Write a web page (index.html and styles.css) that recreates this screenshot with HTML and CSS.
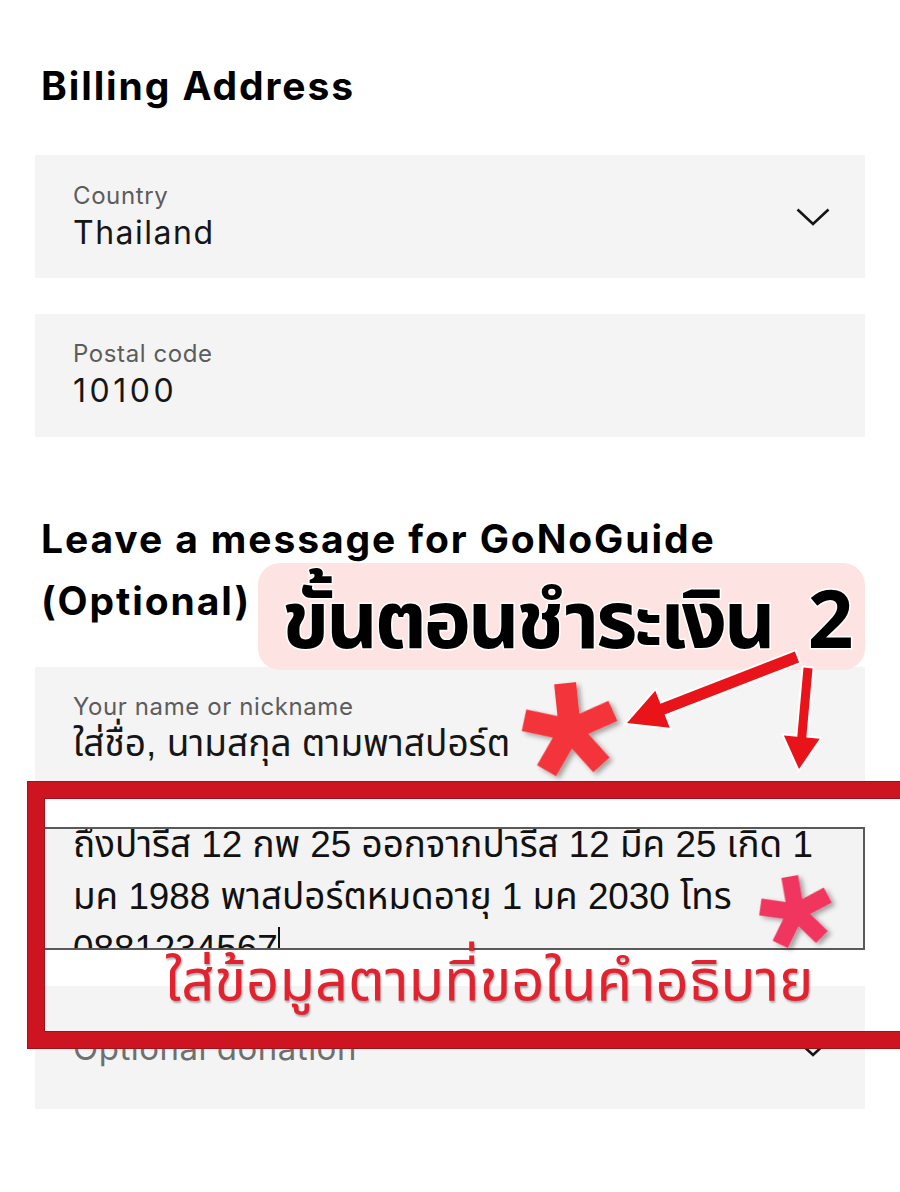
FILE: index.html
```html
<!DOCTYPE html>
<html lang="th">
<head>
<meta charset="utf-8">
<title>Billing Address</title>
<link rel="stylesheet" href="styles.css">
</head>
<body>
<div class="screen">
  <main class="page">
    <h2 class="title">Billing Address</h2>

    <div class="field field-select">
      <div class="field-text">
        <span class="label">Country</span>
        <span class="value">Thailand</span>
      </div>
      <svg class="chevron" viewBox="0 0 34 18" width="34" height="18"><path d="M1.5 1.5 L17 16 L32.5 1.5" fill="none" stroke="#161616" stroke-width="2.6"/></svg>
    </div>

    <div class="field">
      <div class="field-text">
        <span class="label">Postal code</span>
        <span class="value value-num">10100</span>
      </div>
    </div>

    <h2 class="title title-msg">Leave a message for GoNoGuide<br>(Optional)</h2>

    <div class="field field-name">
      <div class="field-text">
        <span class="label">Your name or nickname</span>
        <span class="value value-thai">ใส่ชื่อ, นามสกุล ตามพาสปอร์ต</span>
      </div>
    </div>

    <div class="message">
      <div class="message-text">ถึงปารีส 12 กพ 25 ออกจากปารีส 12 มีค 25 เกิด 1<br>มค 1988 พาสปอร์ตหมดอายุ 1 มค 2030 โทร<br>0881234567<span class="caret"></span></div>
    </div>

    <div class="field field-select field-donation">
      <span class="placeholder">Optional donation</span>
      <svg class="chevron" viewBox="0 0 34 18" width="34" height="18"><path d="M1.5 1.5 L17 16 L32.5 1.5" fill="none" stroke="#161616" stroke-width="2.6"/></svg>
    </div>
  </main>

  <div class="step-label">ขั้นตอนชำระเงิน&nbsp;&nbsp;2</div>
  <div class="highlight-frame"></div>
  <div class="hint">ใส่ข้อมูลตามที่ขอในคำอธิบาย</div>

  <svg class="marks" viewBox="0 0 900 1192" width="900" height="1192">
    <defs>
      <filter id="shadow" x="-30%" y="-30%" width="160%" height="160%">
        <feDropShadow dx="3" dy="3" stdDeviation="2.5" flood-color="#000" flood-opacity="0.35"/>
      </filter>
    </defs>
    <g class="arrow">
      <polygon points="794.9,651.6 660.4,703.8 655.3,690.7 627,723 669.7,727.7 664.6,714.6 799.1,662.4"/>
      <polygon points="803.5,667.6 797.3,736.7 783.9,735.5 799,769 819.7,738.7 806.3,737.5 812.5,668.4"/>
    </g>
    <g filter="url(#shadow)" transform="translate(570 730) rotate(-6)" stroke="#f3363b" stroke-width="22">
      <line x1="0" y1="0" x2="0" y2="-47"/>
      <line x1="0" y1="0" x2="0" y2="-47" transform="rotate(72)"/>
      <line x1="0" y1="0" x2="0" y2="-47" transform="rotate(144)"/>
      <line x1="0" y1="0" x2="0" y2="-47" transform="rotate(216)"/>
      <line x1="0" y1="0" x2="0" y2="-47" transform="rotate(288)"/>
    </g>
    <g filter="url(#shadow)" transform="translate(796 912) rotate(-10)" stroke="#f0355e" stroke-width="17">
      <line x1="0" y1="0" x2="0" y2="-36"/>
      <line x1="0" y1="0" x2="0" y2="-36" transform="rotate(72)"/>
      <line x1="0" y1="0" x2="0" y2="-36" transform="rotate(144)"/>
      <line x1="0" y1="0" x2="0" y2="-36" transform="rotate(216)"/>
      <line x1="0" y1="0" x2="0" y2="-36" transform="rotate(288)"/>
    </g>
  </svg>
</div>
</body>
</html>
```
FILE: styles.css
```css
html, body {
  margin: 0;
  padding: 0;
  background: #ffffff;
}

body {
  font-family: "Inter", "Noto Sans Thai", "Loma", "Garuda", "Noto Sans", sans-serif;
  color: #161616;
}

.screen {
  position: relative;
  width: 900px;
  height: 1192px;
  overflow: hidden;
}

.page {
  padding: 64px 35px 0 35px;
  display: flex;
  flex-direction: column;
}

.title {
  margin: 0 0 47px 6px;
  font-size: 39px;
  line-height: 44px;
  font-weight: 700;
  letter-spacing: 1.9px;
  color: #000;
}

.title-msg {
  margin-top: 35px;
  margin-bottom: 35px;
  line-height: 62px;
}

.field {
  box-sizing: border-box;
  height: 123px;
  background: #f4f4f4;
  padding: 26px 35px 0 38px;
  margin-bottom: 36px;
}

.field-select {
  display: flex;
  align-items: center;
  justify-content: space-between;
  padding-top: 0;
}

.field-text {
  display: flex;
  flex-direction: column;
  gap: 4px;
}

.label {
  font-size: 24px;
  line-height: 28px;
  color: #5c5c5c;
  letter-spacing: 0.6px;
}

.value {
  font-size: 32px;
  line-height: 38px;
  color: #161616;
  letter-spacing: 1.5px;
}

.value-num {
  letter-spacing: 3.5px;
}

.value-thai {
  font-family: "Liberation Sans", "Noto Sans Thai", "Loma", "Garuda", sans-serif;
  font-size: 37px;
  letter-spacing: 0;
}

.chevron {
  display: block;
  flex: none;
}

.field-name {
  height: 124px;
  margin-bottom: 36px;
}

.message {
  box-sizing: border-box;
  height: 123px;
  background: #f3f3f3;
  border: 2px solid #595959;
  overflow: hidden;
  margin-bottom: 36px;
}

.message-text {
  margin-top: -10px;
  padding-left: 36px;
  font-family: "Liberation Sans", "Noto Sans Thai", "Loma", "Garuda", sans-serif;
  font-size: 36.8px;
  line-height: 52px;
  color: #111;
  white-space: nowrap;
}

.caret {
  display: inline-block;
  width: 2px;
  height: 36px;
  background: #111;
  vertical-align: -2px;
}

.field-donation {
  margin-bottom: 0;
}

.placeholder {
  font-size: 33px;
  color: #6f6f6f;
  letter-spacing: 0.5px;
}

/* annotation overlays */
.step-label {
  position: absolute;
  left: 258px;
  top: 563px;
  width: 607px;
  height: 107px;
  box-sizing: border-box;
  border-radius: 22px;
  background: #fde3e1;
  padding-left: 24px;
  font-family: "Noto Sans Thai", "Loma", "Garuda", "Noto Sans", sans-serif;
  font-weight: 700;
  font-stretch: condensed;
  font-size: 80px;
  line-height: 122px;
  letter-spacing: -3.2px;
  color: #000;
  -webkit-text-stroke: 3px #fff;
  paint-order: stroke fill;
  white-space: nowrap;
  overflow: visible;
}

.highlight-frame {
  position: absolute;
  left: 28px;
  top: 782px;
  width: 900px;
  height: 266px;
  box-sizing: border-box;
  border: 16px solid #cc1521;
  box-shadow: 0 0 0 1px #a80f18, inset 0 0 0 1px #a80f18;
}

.hint {
  position: absolute;
  left: 165px;
  top: 937px;
  font-family: "Noto Sans Thai", "Loma", "Garuda", "Noto Sans", sans-serif;
  font-size: 58px;
  line-height: 90px;
  color: #e3222f;
  text-shadow: 1px 2px 2px rgba(0, 0, 0, 0.3);
  white-space: nowrap;
}

.marks {
  position: absolute;
  left: 0;
  top: 0;
  pointer-events: none;
}

.arrow polygon {
  fill: #e8141a;
  stroke: #ffffff;
  stroke-width: 4;
  stroke-linejoin: miter;
  paint-order: stroke fill;
}
```
